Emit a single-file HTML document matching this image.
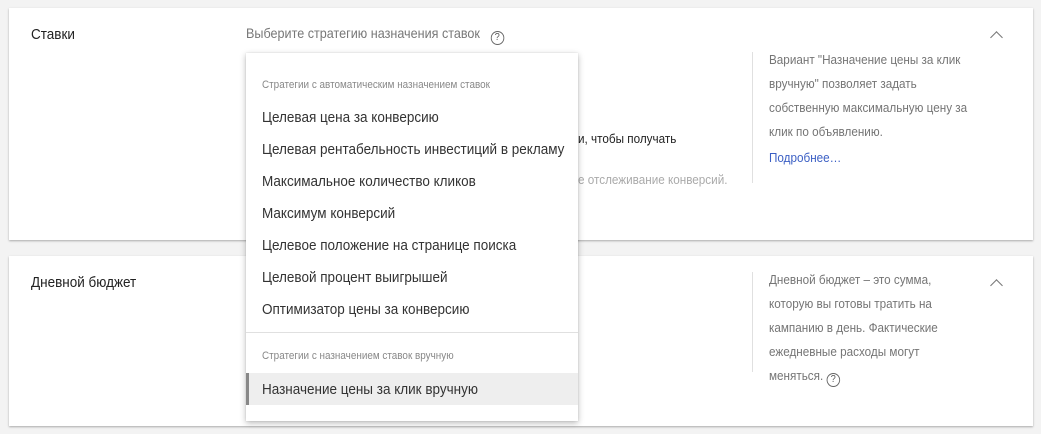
<!DOCTYPE html>
<html><head><meta charset="utf-8"><style>
*{margin:0;padding:0;box-sizing:border-box}
body{width:1041px;height:434px;background:#f3f3f3;position:relative;overflow:hidden;font-family:"Liberation Sans","Noto Sans CJK SC",sans-serif;color:#333}
.card{position:absolute;left:9px;width:1024px;background:#fff;box-shadow:0 1px 2px rgba(0,0,0,.3)}
.abs{position:absolute;white-space:nowrap;transform:scaleX(.9);transform-origin:left top}
.title{font-size:15px;color:#222}
.vline{position:absolute;width:1px;background:#e0e0e0}
.help{font-size:13px;color:#757575;line-height:24px}
.chev{position:absolute;width:9px;height:9px;border-left:1.5px solid #777;border-top:1.5px solid #777;transform:rotate(45deg)}
.q{display:inline-block;width:15px;height:14px;border:1.3px solid #666;border-radius:50%;font-size:10px;line-height:12px;text-align:center;color:#555;vertical-align:-2px}
.menu{position:absolute;left:246px;top:53px;width:332px;height:368px;background:#fff;box-shadow:0 2px 6px rgba(0,0,0,.28),0 0 1px rgba(0,0,0,.15)}
.hdr{position:absolute;left:16px;font-size:11px;color:#888;white-space:nowrap;transform:scaleX(.9);transform-origin:left top}
.it{position:absolute;left:16px;font-size:15px;color:#333;white-space:nowrap;transform:scaleX(.9);transform-origin:left top}
</style></head><body>
<div class="card" style="top:8px;height:232px">
  <div class="abs title" style="left:22px;top:18px">Ставки</div>
  <div class="abs" style="left:237px;top:17px;font-size:14px;color:#777">Выберите стратегию назначения ставок &nbsp;&nbsp;<span class="q">?</span></div>
  <div class="abs" style="left:569px;top:123px;font-size:13px;color:#222">и, чтобы получать</div>
  <div class="abs" style="left:569px;top:164px;font-size:13px;color:#aaa">е отслеживание конверсий.</div>
  <div class="vline" style="left:743px;top:44px;height:131px"></div>
  <div class="abs help" style="left:760px;top:40px">Вариант "Назначение цены за клик<br>вручную" позволяет задать<br>собственную максимальную цену за<br>клик по объявлению.</div>
  <div class="abs" style="left:760px;top:142px;font-size:13px;color:#3b5fc4">Подробнее…</div>
  <div class="chev" style="left:983px;top:25px"></div>
</div>
<div class="card" style="top:256px;height:170px">
  <div class="abs title" style="left:22px;top:18px">Дневной бюджет</div>
  <div class="vline" style="left:743px;top:16px;height:100px"></div>
  <div class="abs help" style="left:760px;top:12px">Дневной бюджет – это сумма,<br>которую вы готовы тратить на<br>кампанию в день. Фактические<br>ежедневные расходы могут<br>меняться. <span class="q">?</span></div>
  <div class="chev" style="left:983px;top:25px"></div>
</div>
<div class="menu">
  <div class="hdr" style="top:26px">Стратегии с автоматическим назначением ставок</div>
  <div class="it" style="top:56px">Целевая цена за конверсию</div>
  <div class="it" style="top:88px">Целевая рентабельность инвестиций в рекламу</div>
  <div class="it" style="top:120px">Максимальное количество кликов</div>
  <div class="it" style="top:152px">Максимум конверсий</div>
  <div class="it" style="top:184px">Целевое положение на странице поиска</div>
  <div class="it" style="top:216px">Целевой процент выигрышей</div>
  <div class="it" style="top:248px">Оптимизатор цены за конверсию</div>
  <div style="position:absolute;left:0;right:0;top:279px;height:1px;background:#e0e0e0"></div>
  <div class="hdr" style="top:297px">Стратегии с назначением ставок вручную</div>
  <div style="position:absolute;left:0;right:0;top:320px;height:32px;background:#eeeeee;border-left:3px solid #888"></div>
  <div class="it" style="top:328px">Назначение цены за клик вручную</div>
</div>
</body></html>
